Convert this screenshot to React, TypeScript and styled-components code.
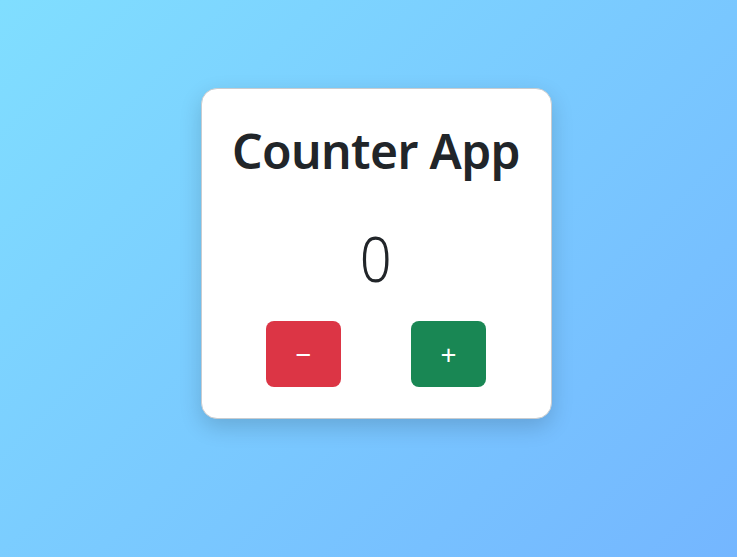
import React, { useState } from "react";
import styled, { createGlobalStyle } from "styled-components";

const Global = createGlobalStyle`
  html, body { margin: 0; padding: 0; }
  body {
    font-family: "Noto Sans", "Open Sans", sans-serif;
    background: linear-gradient(135deg, #80deff 0%, #74b6ff 100%);
    min-height: 557px;
  }
`;

const Page = styled.div`
  min-height: 557px;
  display: flex;
  justify-content: center;
  align-items: flex-start;
  padding: 88px 0 0 15px;
  box-sizing: border-box;
`;

const Card = styled.div`
  width: 351px;
  height: 331px;
  box-sizing: border-box;
  background: #ffffff;
  border: 1px solid #c8ccd0;
  border-radius: 16px;
  box-shadow: 0 8px 22px rgba(0, 0, 0, 0.16);
  display: flex;
  flex-direction: column;
  align-items: center;
  padding-top: 33px;
`;

const Title = styled.h1`
  margin: 0;
  font-size: 48px;
  font-weight: 600;
  color: #212529;
  line-height: 1.2;
  letter-spacing: -0.6px;
`;

const Count = styled.div`
  margin-top: 41px;
  font-size: 62px;
  font-weight: 300;
  color: #212529;
  line-height: 1.2;
  transform: scaleX(0.9);
`;

const Buttons = styled.div`
  display: flex;
  gap: 70px;
  margin-top: 26px;
`;

const Btn = styled.button<{ $variant: "danger" | "success" }>`
  width: 75px;
  height: 66px;
  border: none;
  border-radius: 8px;
  background: ${(p) => (p.$variant === "danger" ? "#dc3545" : "#198754")};
  color: #ffffff;
  font-family: "Noto Sans", sans-serif;
  font-size: 28px;
  font-weight: 400;
  line-height: 1;
  padding: 0;
  cursor: pointer;
  display: flex;
  align-items: center;
  justify-content: center;
`;

export default function App() {
  const [count, setCount] = useState(0);
  return (
    <>
      <Global />
      <Page>
        <Card>
          <Title>Counter App</Title>
          <Count>{count}</Count>
          <Buttons>
            <Btn $variant="danger" onClick={() => setCount((c) => c - 1)}>−</Btn>
            <Btn $variant="success" onClick={() => setCount((c) => c + 1)}>+</Btn>
          </Buttons>
        </Card>
      </Page>
    </>
  );
}
